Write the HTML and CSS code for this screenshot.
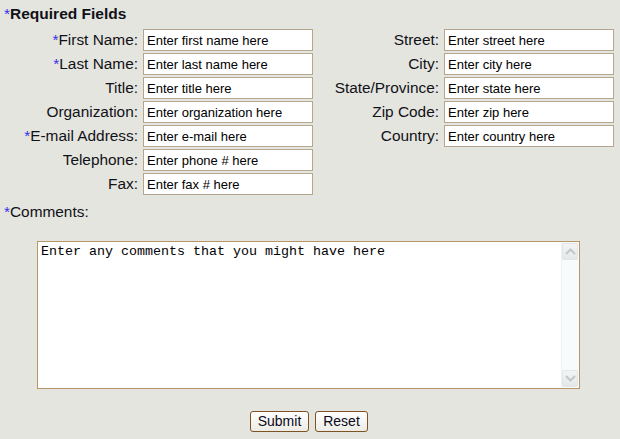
FILE: index.html
```html
<!DOCTYPE html>
<html>
<head>
<meta charset="utf-8">
<link rel="stylesheet" href="styles.css">
</head>
<body>
<form class="form">
  <div class="title"><span class="req">*</span>Required Fields</div>
  <div class="cols">
    <div class="grid grid-left">
      <label class="lbl"><span class="req">*</span>First Name:</label><input class="field" value="Enter first name here">
      <label class="lbl"><span class="req">*</span>Last Name:</label><input class="field" value="Enter last name here">
      <label class="lbl">Title:</label><input class="field" value="Enter title here">
      <label class="lbl">Organization:</label><input class="field" value="Enter organization here">
      <label class="lbl"><span class="req">*</span>E-mail Address:</label><input class="field" value="Enter e-mail here">
      <label class="lbl">Telephone:</label><input class="field" value="Enter phone # here">
      <label class="lbl">Fax:</label><input class="field" value="Enter fax # here">
    </div>
    <div class="grid grid-right">
      <label class="lbl">Street:</label><input class="field" value="Enter street here">
      <label class="lbl">City:</label><input class="field" value="Enter city here">
      <label class="lbl">State/Province:</label><input class="field" value="Enter state here">
      <label class="lbl">Zip Code:</label><input class="field" value="Enter zip here">
      <label class="lbl">Country:</label><input class="field" value="Enter country here">
    </div>
  </div>
  <div class="comments-label"><span class="req">*</span>Comments:</div>
  <div class="textbox">
    <textarea class="ta">Enter any comments that you might have here</textarea>
    <div class="sbar">
      <div class="sbtn">
        <svg width="11" height="7" viewBox="0 0 11 7"><path d="M1 6 L5.5 1.5 L10 6" fill="none" stroke="#c3c7c7" stroke-width="2"/></svg>
      </div>
      <div class="strack"></div>
      <div class="sbtn">
        <svg width="11" height="7" viewBox="0 0 11 7"><path d="M1 1 L5.5 5.5 L10 1" fill="none" stroke="#c3c7c7" stroke-width="2"/></svg>
      </div>
    </div>
  </div>
  <div class="actions">
    <button type="button" class="btn btn-submit">Submit</button>
    <button type="button" class="btn btn-reset">Reset</button>
  </div>
</form>
</body>
</html>
```
FILE: styles.css
```css
html, body {
  margin: 0;
  padding: 0;
  background: #e5e5df;
}
body {
  font-family: "Liberation Sans", Arial, sans-serif;
  color: #111118;
}
.form {
  padding: 4px 0 0 4px;
}
.title {
  font-weight: bold;
  font-size: 15.5px;
  line-height: 20px;
  height: 25px;
}
.req {
  color: #3030f0;
  font-weight: normal;
}
.cols {
  display: flex;
}
.grid {
  display: grid;
  column-gap: 5px;
  row-gap: 2px;
  grid-auto-rows: 22px;
  align-items: center;
}
.grid-left {
  grid-template-columns: 134px 170px;
}
.grid-right {
  grid-template-columns: 121px 170px;
  margin-left: 5px;
}
.lbl {
  font-size: 15.4px;
  text-align: right;
  white-space: nowrap;
  line-height: 22px;
}
.field {
  box-sizing: border-box;
  width: 170px;
  height: 22px;
  margin: 0;
  border: 1px solid #b5a68c;
  background: #fff;
  padding: 0 3px;
  font-family: "Liberation Sans", Arial, sans-serif;
  font-size: 13px;
  color: #000;
  outline: none;
}
.comments-label {
  font-size: 15.4px;
  line-height: 20px;
  margin-top: 7px;
}
.textbox {
  box-sizing: border-box;
  margin: 19px 0 0 33px;
  width: 543px;
  height: 148px;
  border: 1px solid #b9956a;
  background: #fff;
  display: flex;
}
.ta {
  flex: 1;
  border: none;
  outline: none;
  resize: none;
  margin: 0;
  padding: 2px 3px;
  font-family: "Liberation Mono", "Courier New", monospace;
  font-size: 13.33px;
  line-height: 16px;
  color: #000;
  background: #fff;
  overflow: hidden;
}
.sbar {
  width: 16px;
  border-left: 1px solid #eef2f3;
  background: #f7fbfc;
  display: flex;
  flex-direction: column;
  padding: 1px 1px 1px 0;
}
.sbtn {
  height: 15px;
  border: 1px solid #e2e6e6;
  border-radius: 2px;
  background: linear-gradient(#f3f5f5, #e4e8e8);
  display: flex;
  align-items: center;
  justify-content: center;
}
.strack {
  flex: 1;
}
.actions {
  display: flex;
  justify-content: center;
  gap: 6px;
  margin-top: 22px;
  padding-right: 6px;
}
.btn {
  box-sizing: border-box;
  height: 21px;
  border: 1px solid #7d5224;
  border-radius: 3px;
  background: linear-gradient(#ffffff, #ecebe4);
  font-family: "Liberation Sans", Arial, sans-serif;
  font-size: 14px;
  color: #0a0a20;
  padding: 0;
  line-height: 19px;
}
.btn-submit { width: 59px; }
.btn-reset { width: 53px; }
```
